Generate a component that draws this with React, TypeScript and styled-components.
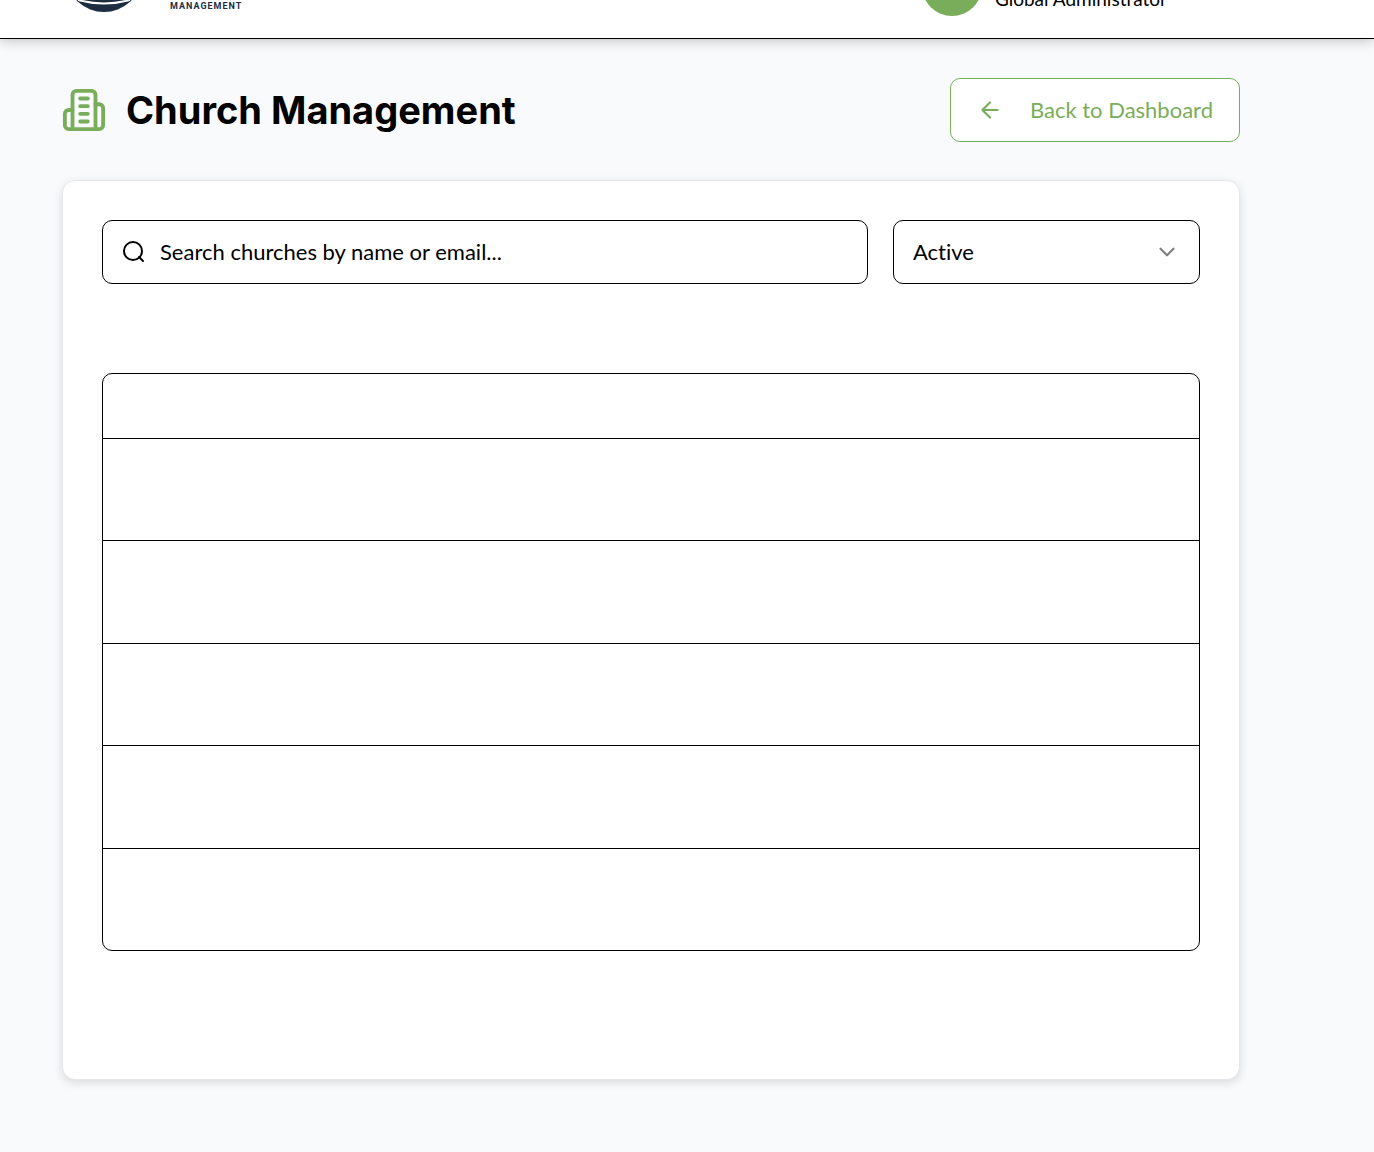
import React from "react";
import styled, { createGlobalStyle } from "styled-components";

const GREEN = "#7aad5a";
const NAVY = "#1e2d42";

const GlobalStyle = createGlobalStyle`
  *, *::before, *::after { box-sizing: border-box; }
  body {
    margin: 0;
    background: #f9fafc;
    color: #000;
    font-family: Lato, "Liberation Sans", sans-serif;
    font-size: 22px;
    line-height: 32px;
    font-variant-ligatures: none;
  }
  button, input, select { font: inherit; color: inherit; font-variant-ligatures: none; }
`;

const Page = styled.div`
  min-height: 100vh;
`;

const TopBar = styled.header`
  display: flex;
  align-items: flex-end;
  justify-content: space-between;
  height: 39px;
  padding: 0 207px 22px 71px;
  background: #fff;
  border-bottom: 1px solid #000;
  box-shadow: 0 2px 12px rgba(0, 0, 0, 0.22);
`;

const Brand = styled.div`
  display: flex;
  align-items: flex-end;
  gap: 33px;
  padding-bottom: 4px;
`;

const BrandName = styled.span`
  color: ${NAVY};
  font-family: Roboto, sans-serif;
  font-size: 9px;
  font-weight: 700;
  line-height: 12px;
  letter-spacing: 1px;
`;

const User = styled.div`
  display: flex;
  align-items: flex-end;
  gap: 13px;
`;

const Avatar = styled.span`
  width: 60px;
  height: 60px;
  border-radius: 50%;
  background: ${GREEN};
`;

const Role = styled.span`
  padding-bottom: 3px;
  font-size: 19px;
  line-height: 28px;
`;

const Main = styled.main`
  display: flex;
  flex-direction: column;
  gap: 38px;
  padding: 39px 134px 72px 62px;
`;

const TitleRow = styled.div`
  display: flex;
  align-items: center;
  justify-content: space-between;
`;

const Title = styled.h1`
  display: flex;
  align-items: center;
  gap: 20px;
  margin: 0;
  padding-bottom: 1px;
  font-family: Inter, sans-serif;
  font-size: 38px;
  font-weight: 700;
  line-height: 48px;
`;

const BackButton = styled.button`
  display: flex;
  align-items: center;
  gap: 27px;
  height: 64px;
  padding: 0 26px;
  color: ${GREEN};
  background: #fff;
  border: 1px solid ${GREEN};
  border-radius: 10px;
`;

const Card = styled.section`
  padding: 39px;
  background: #fff;
  border: 1px solid #e5e7eb;
  border-radius: 13px;
  box-shadow: 0 3px 10px rgba(0, 0, 0, 0.13);
`;

const Filters = styled.div`
  display: grid;
  grid-template-columns: 1fr 307px;
  gap: 25px;
`;

const Field = styled.label`
  display: flex;
  align-items: center;
  gap: 14px;
  height: 64px;
  padding: 0 19px;
  border: 1px solid #000;
  border-radius: 10px;
`;

const SearchInput = styled.input`
  flex: 1;
  min-width: 0;
  padding: 0;
  background: none;
  border: 0;
  outline: 0;
  &::placeholder { color: #000; opacity: 1; }
`;

const StatusSelect = styled.select`
  flex: 1;
  min-width: 0;
  padding: 0;
  appearance: none;
  background: none;
  border: 0;
  outline: 0;
`;

const TableFrame = styled.div`
  margin: 89px 0;
  border: 1px solid #000;
  border-radius: 10px;
`;

const Table = styled.table`
  display: block;
  width: 100%;
`;

const HeadRows = styled.thead`
  display: grid;
  height: 64px;
`;

const BodyRows = styled.tbody`
  display: grid;
  grid-auto-rows: 1fr;
  min-height: 512px;
`;

const Row = styled.tr<{ $divided?: boolean }>`
  display: grid;
  border-top: ${(p) => (p.$divided ? "1px solid #000" : "0")};
`;

const LogoMark = () => (
  <svg width="66" height="60" viewBox="0 0 66 60" aria-hidden="true">
    <ellipse cx="33" cy="27" rx="36" ry="33" fill={NAVY} />
    <path d="M7 48Q33 55 59 48" fill="none" stroke="#fff" strokeWidth="2" />
  </svg>
);

const BuildingIcon = () => (
  <svg
    width="44"
    height="44"
    viewBox="0.5 0.5 23 23"
    fill="none"
    stroke={GREEN}
    strokeWidth="2"
    strokeLinecap="round"
    strokeLinejoin="round"
    aria-hidden="true"
  >
    <path d="M6 22V4a2 2 0 0 1 2-2h8a2 2 0 0 1 2 2v18Z" />
    <path d="M6 12H4a2 2 0 0 0-2 2v6a2 2 0 0 0 2 2h2" />
    <path d="M18 9h2a2 2 0 0 1 2 2v9a2 2 0 0 1-2 2h-2" />
    <path d="M10 6h4M10 10h4M10 14h4M10 18h4" />
  </svg>
);

const ArrowIcon = () => (
  <svg
    width="26"
    height="26"
    viewBox="0 0 24 24"
    fill="none"
    stroke="currentColor"
    strokeWidth="2"
    strokeLinecap="round"
    strokeLinejoin="round"
    aria-hidden="true"
  >
    <path d="m12 19-7-7 7-7M19 12H5" />
  </svg>
);

const SearchIcon = () => (
  <svg
    width="24"
    height="24"
    viewBox="0 0 24 24"
    fill="none"
    stroke="#000"
    strokeWidth="2"
    strokeLinecap="round"
    strokeLinejoin="round"
    aria-hidden="true"
  >
    <circle cx="11" cy="11" r="9" />
    <path d="m21 21-4-4" />
  </svg>
);

const ChevronIcon = () => (
  <svg
    width="26"
    height="26"
    viewBox="0 0 24 24"
    fill="none"
    stroke="#808080"
    strokeWidth="2"
    strokeLinecap="round"
    strokeLinejoin="round"
    aria-hidden="true"
  >
    <path d="m6 9 6 6 6-6" />
  </svg>
);

const rows = [1, 2, 3, 4, 5];

export default function App() {
  return (
    <Page>
      <GlobalStyle />
      <TopBar>
        <Brand>
          <LogoMark />
          <BrandName>MANAGEMENT</BrandName>
        </Brand>
        <User>
          <Avatar />
          <Role>Global Administrator</Role>
        </User>
      </TopBar>
      <Main>
        <TitleRow>
          <Title>
            <BuildingIcon />
            Church Management
          </Title>
          <BackButton type="button">
            <ArrowIcon />
            Back to Dashboard
          </BackButton>
        </TitleRow>
        <Card>
          <Filters>
            <Field>
              <SearchIcon />
              <SearchInput
                type="text"
                aria-label="Search churches"
                placeholder="Search churches by name or email..."
              />
            </Field>
            <Field>
              <StatusSelect aria-label="Status" defaultValue="Active">
                <option>Active</option>
              </StatusSelect>
              <ChevronIcon />
            </Field>
          </Filters>
          <TableFrame>
            <Table>
              <HeadRows>
                <Row>
                  <th />
                </Row>
              </HeadRows>
              <BodyRows>
                {rows.map((id) => (
                  <Row key={id} $divided>
                    <td />
                  </Row>
                ))}
              </BodyRows>
            </Table>
          </TableFrame>
        </Card>
      </Main>
    </Page>
  );
}
